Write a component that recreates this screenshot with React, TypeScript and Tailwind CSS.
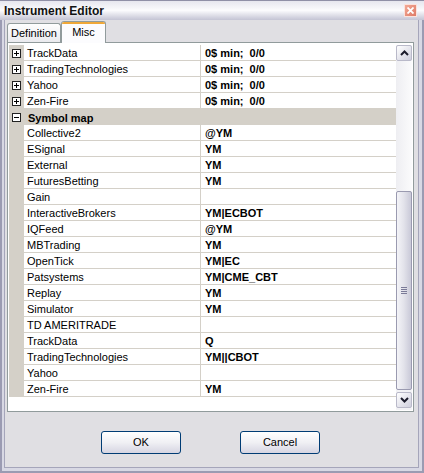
import React from "react";

type Row =
  | { kind: "node"; name: string; value: string }
  | { kind: "category"; name: string }
  | { kind: "item"; name: string; value: string };

const rows: Row[] = [
  { kind: "node", name: "TrackData", value: "0$ min;  0/0" },
  { kind: "node", name: "TradingTechnologies", value: "0$ min;  0/0" },
  { kind: "node", name: "Yahoo", value: "0$ min;  0/0" },
  { kind: "node", name: "Zen-Fire", value: "0$ min;  0/0" },
  { kind: "category", name: "Symbol map" },
  { kind: "item", name: "Collective2", value: "@YM" },
  { kind: "item", name: "ESignal", value: "YM" },
  { kind: "item", name: "External", value: "YM" },
  { kind: "item", name: "FuturesBetting", value: "YM" },
  { kind: "item", name: "Gain", value: "" },
  { kind: "item", name: "InteractiveBrokers", value: "YM|ECBOT" },
  { kind: "item", name: "IQFeed", value: "@YM" },
  { kind: "item", name: "MBTrading", value: "YM" },
  { kind: "item", name: "OpenTick", value: "YM|EC" },
  { kind: "item", name: "Patsystems", value: "YM|CME_CBT" },
  { kind: "item", name: "Replay", value: "YM" },
  { kind: "item", name: "Simulator", value: "YM" },
  { kind: "item", name: "TD AMERITRADE", value: "" },
  { kind: "item", name: "TrackData", value: "Q" },
  { kind: "item", name: "TradingTechnologies", value: "YM||CBOT" },
  { kind: "item", name: "Yahoo", value: "" },
  { kind: "item", name: "Zen-Fire", value: "YM" },
];

function ExpandBox({ open }: { open: boolean }) {
  return (
    <svg width="9" height="9" viewBox="0 0 9 9" className="block">
      <rect x="0.5" y="0.5" width="8" height="8" fill="#fff" stroke="#222" />
      <path d="M2 4.5h5" stroke="#000" />
      {!open && <path d="M4.5 2v5" stroke="#000" />}
    </svg>
  );
}

function Arrow({ dir }: { dir: "up" | "down" }) {
  return (
    <svg width="9" height="6" viewBox="0 0 9 6" className="block">
      <path
        d={dir === "up" ? "M1 5 L4.5 1.5 L8 5" : "M1 1 L4.5 4.5 L8 1"}
        fill="none"
        stroke="#1b1b2b"
        strokeWidth="2"
      />
    </svg>
  );
}

function GridRow({ row }: { row: Row }) {
  if (row.kind === "category") {
    return (
      <div className="flex h-[16px] bg-[#d4d0c8]">
        <div className="flex w-[15px] shrink-0 items-center justify-center">
          <ExpandBox open />
        </div>
        <div className="flex items-center pl-[4px] pt-[2px] font-bold">{row.name}</div>
      </div>
    );
  }
  return (
    <div className="flex h-[16px]">
      <div className="flex w-[15px] shrink-0 items-center justify-center bg-[#d4d0c8]">
        {row.kind === "node" && <ExpandBox open={false} />}
      </div>
      <div className="flex w-[177px] shrink-0 items-center border-b border-r border-[#d4d0c8] bg-white pl-[3px] pt-[2px]">
        {row.name}
      </div>
      <div className="flex flex-1 items-center whitespace-pre border-b border-[#d4d0c8] bg-white pl-[4px] pt-[2px] font-bold">
        {row.value}
      </div>
    </div>
  );
}

function ScrollBar() {
  return (
    <div className="flex w-[16px] shrink-0 flex-col bg-[#f2f2f5]">
      <div className="flex h-[16px] items-center justify-center rounded-[2px] border border-[#b9b9c9] bg-gradient-to-br from-[#ffffff] to-[#cfcfdd]">
        <Arrow dir="up" />
      </div>
      <div className="h-[130px] bg-gradient-to-r from-[#eeeef2] to-[#fbfbfc]" />
      <div className="flex h-[199px] items-center justify-center rounded-[2px] border border-[#9a9ab0] bg-gradient-to-r from-[#f4f4f8] via-[#e2e2ea] to-[#c9c9d8]">
        <div className="flex flex-col gap-[1px]">
          <div className="h-[1px] w-[6px] bg-[#7a7a98]" />
          <div className="h-[1px] w-[6px] bg-[#7a7a98]" />
          <div className="h-[1px] w-[6px] bg-[#7a7a98]" />
          <div className="h-[1px] w-[6px] bg-[#7a7a98]" />
        </div>
      </div>
      <div className="h-[2px]" />
      <div className="flex h-[16px] items-center justify-center rounded-[2px] border border-[#b9b9c9] bg-gradient-to-br from-[#ffffff] to-[#cfcfdd]">
        <Arrow dir="down" />
      </div>
    </div>
  );
}

export default function App() {
  return (
    <div
      className="flex h-[473px] w-[424px] flex-col overflow-hidden bg-[#c8c8d6] text-[11px] leading-none text-black"
      style={{ fontFamily: '"Liberation Sans", Arial, sans-serif' }}
    >
      {/* title bar */}
      <div className="flex h-[20px] shrink-0 items-center justify-between border-t border-[#8f8fa6] bg-gradient-to-b from-[#e6e6ee] via-[#fbfbfd] to-[#c4c4d4] pl-[4px] pr-[7px]">
        <span className="pt-[1px] text-[12px] font-bold text-[#111]">Instrument Editor</span>
        <div className="flex h-[13px] w-[13px] items-center justify-center border border-[#fbe2dc] bg-gradient-to-br from-[#f2a896] to-[#de7a66]">
          <svg width="7" height="7" viewBox="0 0 7 7">
            <path d="M0.5 0.5 L6.5 6.5 M6.5 0.5 L0.5 6.5" stroke="#fff" strokeWidth="1.8" />
          </svg>
        </div>
      </div>

      {/* window frame */}
      <div className="flex flex-1 border-x-[2px] border-b-[2px] border-[#9b9bb2] bg-[#d8d8e4] pb-[3px] pl-[2px] pr-[3px]">
        <div className="flex flex-1 flex-col border-b border-l border-r border-[#a5a5ba] bg-[#e0dfe3] pl-[2px] pr-[4px]">
          {/* tabs */}
          <div className="relative flex h-[22px] items-end">
            <div className="flex h-[19px] w-[54px] items-center justify-center rounded-t-[3px] border border-b-0 border-[#919b9c] bg-gradient-to-b from-[#fefefe] to-[#eaeaee] pt-[1px]">
              Definition
            </div>
            <div className="relative z-10 -mb-[1px] flex h-[22px] w-[45px] flex-col rounded-t-[3px] border border-b-0 border-[#919b9c] bg-[#fcfcfe]">
              <div className="h-[2px] rounded-t-[2px] bg-[#f0a838]" />
              <div className="flex flex-1 items-center justify-center pb-[3px]">Misc</div>
            </div>
          </div>

          {/* tab page */}
          <div className="flex h-[370px] shrink-0 border border-[#919b9c] bg-white px-[1px] pb-[1px] pt-[2px]">
            <div className="flex flex-1 flex-col">
              {rows.map((r, i) => (
                <GridRow key={i} row={r} />
              ))}
            </div>
            <ScrollBar />
          </div>

          {/* buttons */}
          <div className="flex justify-center gap-[59px] pt-[19px]">
            {["OK", "Cancel"].map((label) => (
              <button
                key={label}
                className="flex h-[23px] w-[80px] items-center justify-center rounded-[3px] border border-[#003c74] bg-gradient-to-b from-[#ffffff] via-[#f0f0f4] to-[#d6d5e2] text-[11px]"
              >
                {label}
              </button>
            ))}
          </div>
        </div>
      </div>
    </div>
  );
}
